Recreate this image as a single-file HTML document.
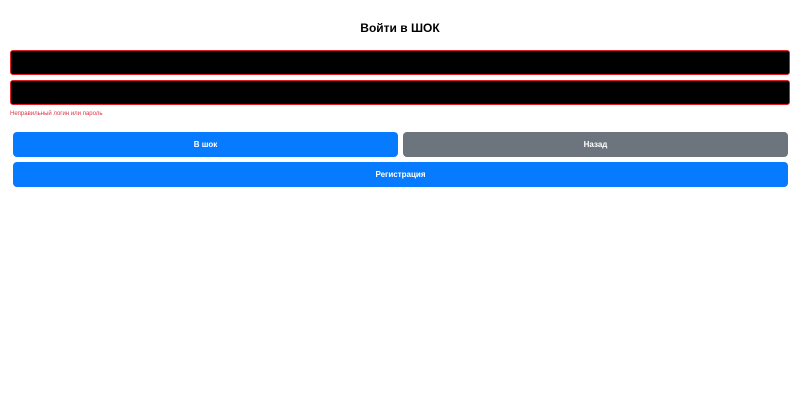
<!DOCTYPE html>
<html><head><meta charset="utf-8"><style>
body{margin:0;width:800px;height:408px;background:#fff;font-family:"Liberation Sans",sans-serif;position:relative}
.t{position:absolute;top:21px;left:0;width:800px;text-align:center;font-weight:bold;font-size:12px;color:#000}
.in{position:absolute;left:10px;width:778px;height:23px;background:#000;border:1px solid #e02020;border-radius:3px}
.err{position:absolute;left:10px;top:111px;font-size:6px;color:#dc3545}
.b{position:absolute;height:25px;border-radius:4px;color:#fff;font-weight:bold;font-size:8px;display:flex;align-items:center;justify-content:center}
</style></head><body>
<div class="t">Войти в ШОК</div>
<div class="in" style="top:50px"></div>
<div class="in" style="top:80px"></div>
<div class="err">Неправильный логин или пароль</div>
<div class="b" style="left:13px;top:132px;width:385px;background:#077bff">В шок</div>
<div class="b" style="left:403px;top:132px;width:385px;background:#6c757d">Назад</div>
<div class="b" style="left:13px;top:162px;width:775px;background:#077bff">Регистрация</div>
</body></html>
